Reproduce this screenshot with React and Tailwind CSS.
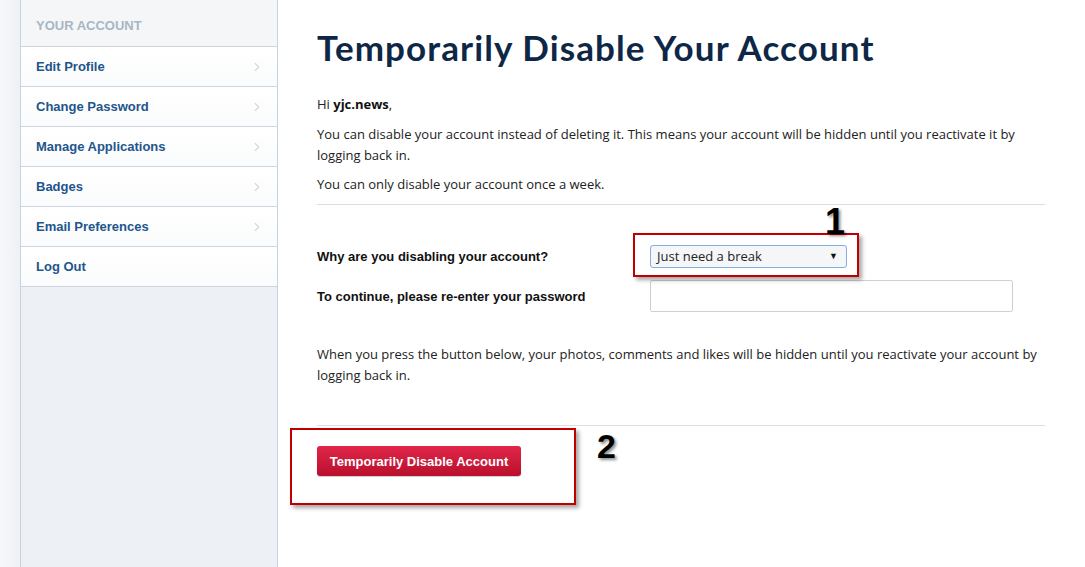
import React from 'react';
import { ChevronRight } from 'lucide-react';

// Sidebar menu entries
const menu = [
  { label: 'Edit Profile', arrow: true },
  { label: 'Change Password', arrow: true },
  { label: 'Manage Applications', arrow: true },
  { label: 'Badges', arrow: true },
  { label: 'Email Preferences', arrow: true },
  { label: 'Log Out', arrow: false },
];

function Sidebar() {
  return (
    <aside className="w-[258px] shrink-0 border-x border-[#c8d3e1] bg-[#edf1f5] flex flex-col">
      <div className="h-[47px] flex items-center pt-[6px] px-[15px] bg-[#f5f6f8] text-[13px] font-bold uppercase text-[#a8b6c4] border-b border-[#cbd4df]">
        Your Account
      </div>
      {menu.map((item) => (
        <div
          key={item.label}
          className="h-[40px] flex items-center justify-between pl-[15px] pr-[13px] bg-gradient-to-b from-white to-[#fafbfc] border-b border-[#cbd4df]"
        >
          <span className="text-[13px] font-bold text-[#22558c]">{item.label}</span>
          {item.arrow && <ChevronRight size={14} strokeWidth={2} className="text-[#d3d8de]" />}
        </div>
      ))}
    </aside>
  );
}

function Annotation({ n, className }) {
  return (
    <span
      className={`absolute font-bold text-black leading-none [text-shadow:2px_2px_3px_rgba(0,0,0,0.45)] ${className}`}
      style={{ fontFamily: '"Liberation Sans Narrow", "Liberation Sans", Arial, sans-serif' }}
    >
      {n}
    </span>
  );
}

const bodyFont = { fontFamily: '"Open Sans", "Liberation Sans", sans-serif' };

export default function App() {
  return (
    <div
      className="flex h-[567px] overflow-hidden bg-white"
      style={{ fontFamily: '"Liberation Sans", Arial, sans-serif' }}
    >
      <div className="w-[20px] shrink-0 bg-gradient-to-r from-[#f7f8fa] to-[#eef1f5]" />
      <Sidebar />

      <main className="flex-1 pl-[39px] pr-[40px] text-[13px] leading-[21px] text-[#222]">
        <h1
          className="pt-[27px] text-[35px] leading-[40px] font-bold text-[#0e2747] tracking-[1.1px]"
          style={{ fontFamily: 'Lato, "Liberation Sans", sans-serif' }}
        >
          Temporarily Disable Your Account
        </h1>

        <div style={bodyFont}>
          <p className="mt-[27px]">
            Hi <b className="text-[#111]">yjc.news</b>,
          </p>
          <p className="mt-[9px]">
            You can disable your account instead of deleting it. This means your account will be hidden until you
            reactivate it by logging back in.
          </p>
          <p className="mt-[8px] pb-[9px] border-b border-[#dedede]">
            You can only disable your account once a week.
          </p>
        </div>

        {/* Form rows */}
        <div className="grid grid-cols-[333px_1fr] items-center gap-y-[12px] mt-[40px]">
          <label className="font-bold text-[#111]">Why are you disabling your account?</label>
          <div className="relative w-[197px]">
            <div className="absolute -left-[17px] -top-[12px] w-[226px] h-[44px] border-2 border-[#c00000] shadow-[3px_3px_4px_rgba(0,0,0,0.35)]" />
            <Annotation n="1" className="left-[175px] -top-[41px] text-[36px]" />
            <div className="relative h-[23px] flex items-center justify-between pl-[6px] pr-[8px] bg-[#f4f6f8] border border-[#86ace2] rounded-[3px]">
              <span className="text-[13px] text-[#222]" style={bodyFont}>Just need a break</span>
              <span className="text-[9px] text-[#111]">▼</span>
            </div>
          </div>

          <label className="font-bold text-[#111]">To continue, please re-enter your password</label>
          <input
            type="password"
            className="w-[363px] h-[32px] border border-[#cfcfcf] rounded-[2px] bg-white outline-none"
          />
        </div>

        <p className="mt-[32px] pb-[39px] border-b border-[#dedede]" style={bodyFont}>
          When you press the button below, your photos, comments and likes will be hidden until you reactivate your
          account by logging back in.
        </p>

        <div className="relative w-[204px] mt-[20px]">
          <div className="absolute -left-[27px] -top-[18px] w-[286px] h-[77px] border-2 border-[#c00000] shadow-[3px_3px_4px_rgba(0,0,0,0.35)]" />
          <Annotation n="2" className="left-[280px] -top-[17px] text-[34px]" />
          <button className="relative w-[204px] h-[30px] rounded-[3px] bg-gradient-to-b from-[#e1264a] to-[#b90f2c] text-white text-[13px] font-bold shadow-[0_1px_1px_rgba(0,0,0,0.2)]">
            Temporarily Disable Account
          </button>
        </div>
      </main>
    </div>
  );
}
